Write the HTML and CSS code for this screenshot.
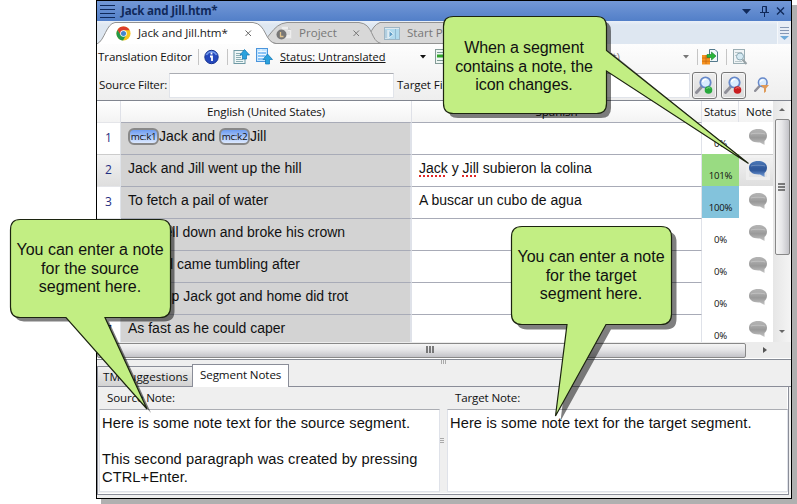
FILE: index.html
```html
<!DOCTYPE html>
<html lang="en">
<head>
<meta charset="utf-8">
<title>Translation Editor</title>
<link rel="stylesheet" href="styles.css">
</head>
<body>
<svg class="defs" width="0" height="0">
  <defs>
    <linearGradient id="gray" x1="0" y1="0" x2="0" y2="1"><stop offset="0" stop-color="#b4b4b4"/><stop offset=".3" stop-color="#a9a9a9"/><stop offset=".55" stop-color="#999"/><stop offset="1" stop-color="#c4c4c4"/></linearGradient>
    <linearGradient id="blue" x1="0" y1="0" x2="0" y2="1"><stop offset="0" stop-color="#4c79b8"/><stop offset=".45" stop-color="#315a9c"/><stop offset=".6" stop-color="#315a9c"/><stop offset="1" stop-color="#7ba3dc"/></linearGradient>
    <symbol id="note" viewBox="0 0 18 16"><path d="M9 0C14 0 18 2.300 18 6.500C18 9 17 11 15.500 12V16L11 13.500C4 14 0 11 0 6.800C0 2.300 4 0 9 0Z"/><path d="M2 5C4 4 14 4 16 5" fill="none" stroke="#fff" stroke-opacity=".25"/></symbol>
    <symbol id="lens" viewBox="0 0 18 18"><path d="M7 10.500L1.500 16.500" stroke="#8f8f98" stroke-width="3" stroke-linecap="round"/><circle cx="10.500" cy="6.500" r="5.200" fill="#d9ecff" stroke="#6688c9" stroke-width="1.800"/><path d="M7.500 6a3.500 3.500 0 0 1 4-2.600" stroke="#fff" stroke-width="1.500" fill="none"/></symbol>
  </defs>
</svg>
<div class="window">
  <header class="titlebar">
    <svg class="menu" width="15" height="15"><path d="M0 1.500H15M0 5.500H15M0 9.500H15M0 13.500H15" stroke="#10295a"/></svg>
    <span class="title">Jack and Jill.htm*</span>
    <svg class="winbtns" width="44" height="14"><path d="M0 5H9L4.500 10Z" fill="#10295a"/><path d="M20.500 2.500H24.500V8.500H20.500ZM18 8.500H27M22.500 8.500V13M24 2V8" stroke="#10295a" fill="none"/><path d="M35 3.500L42 10.500M42 3.500L35 10.500" stroke="#10295a" stroke-width="1.400"/></svg>
  </header>
  <nav class="tabs">
    <svg class="tabshapes" width="420" height="22">
      <path d="M265 22C272 20 273 4 283 .5H420V22Z" fill="#d8d8d8"/>
      <path d="M265 22C272 20 273 4 283 .5H420" fill="none" stroke="#929292"/>
      <path d="M160 21.500C173 20 174 2 190 .5H262C277 2 273 19 284 21.500Z" fill="#d8d8d8" stroke="#929292"/>
      <path d="M0 22C8 18 9 2 18 .5H156C170 2 167 20 179 22Z" fill="#fff"/>
      <path d="M0 22C8 18 9 2 18 .5H156C170 2 167 20 179 21.500H420" fill="none" stroke="#929292"/>
    </svg>
    <div class="tab t1">
      <svg width="15" height="15" viewBox="0 0 16 16"><circle cx="8" cy="8" r="7.500" fill="#f6c51d"/><path d="M1.500 4.200A7.500 7.500 0 0 1 14.600 4.500H8L5 9.500Z" fill="#dc3e2c"/><path d="M1.500 4.200A7.500 7.500 0 0 0 7.500 15.500L10.500 10L5 9.500Z" fill="#23994a"/><circle cx="8" cy="8" r="3.500" fill="#fff"/><circle cx="8" cy="8" r="2.700" fill="#4386cf"/></svg>
      <span>Jack and Jill.htm*</span>
      <svg class="x" width="7" height="7"><path d="M.5.5L6 6M6 .5L.5 6" stroke="#666"/></svg>
    </div>
    <div class="tab t2">
      <svg width="17" height="16"><path d="M5.500 1.500H12L15.500 5V13.500H5.500Z" fill="#eee" stroke="#ddd"/><path d="M12 1.500V5H15.500" fill="#ccc"/><path d="M8 5H12M10 7H14M10 9H14" stroke="#d2d2d2"/><circle cx="5.500" cy="9.500" r="5" fill="#777"/><path d="M4.500 7V11.500H7.500" stroke="#e2c48c" fill="none" stroke-width="1.300"/></svg>
      <span>Project</span>
      <svg class="x" width="7" height="7"><path d="M.5.5L6 6M6 .5L.5 6" stroke="#777"/></svg>
    </div>
    <div class="tab t3">
      <svg width="16" height="13"><rect x=".5" y=".5" width="15" height="12" fill="#b0d9ed" stroke="#9eb5c4"/><path d="M1 1.500H15" stroke="#dfe9ee"/><path d="M1 3H5V12H1Z" fill="#d5e5ee"/><path d="M2 3V11M11.500 2V12" stroke="#8fb9d2"/><path d="M5 3.500V11L9.500 7.200Z" fill="#609dc6" stroke="#e8f3f8"/></svg>
      <span>Start Page</span>
    </div>
    <div class="tabmenu"><svg width="10" height="14"><path d="M0 1.500H9M0 4.500H9M0 7.500H9" stroke="#8598b5"/><path d="M0 10H9L4.500 14Z" fill="#6faad9"/></svg></div>
  </nav>
  <div class="tools">
    <div class="toolbar">
      <span class="name">Translation Editor</span><i class="sep s1"></i>
      <svg class="info" width="16" height="16"><circle cx="7.500" cy="8" r="6.700" fill="#2548bd" stroke="#183591"/><path d="M2.500 6A5.500 5.500 0 0 1 12.500 6" stroke="#6f98eb" stroke-width="1.500" fill="none"/><path d="M6 7.500H8V12M7.500 3.500V5.500" stroke="#fff" stroke-width="1.800" fill="none"/></svg><i class="sep s2"></i>
      <svg class="up1" width="17" height="16"><rect x="1" y="1.500" width="11" height="13" fill="#eff7f7" stroke="#6e99a4"/><path d="M3 4.500H8M3 6.500H8M3 8.500H8M3 10.500H10M3 12.500H10" stroke="#8caeb4"/><path d="M11.500 .5L16.500 6H13.500V10H9.500V6H7Z" fill="#2ba2dd" stroke="#0d76b6" stroke-width=".7"/></svg>
      <svg class="up2" width="17" height="17"><rect x=".5" y=".5" width="11" height="13" fill="#c3e5ff" stroke="#4b95dc"/><path d="M2 3.500H10M2 6.500H10M2 9.500H8M5 1V12" stroke="#eef9ff"/><path d="M2 5H10M2 8H9M2 11H7" stroke="#4d9fee"/><path d="M11.500 6L16.500 11.500H13.500V16H9.500V11.500H7Z" fill="#2ba2dd" stroke="#0d76b6" stroke-width=".7"/></svg>
      <span class="status">Status: Untranslated</span>
      <svg class="arr" width="7" height="4"><path d="M0 0H6L3 3.500Z" fill="#111"/></svg>
      <svg class="sheet" width="16" height="16"><rect x=".5" y=".5" width="14" height="14" fill="#eef6f2" stroke="#849b97"/><path d="M2 3.500H10M2 11.500H10" stroke="#7d9c96"/><path d="M2 7H14" stroke="#31a32c" stroke-width="3"/></svg>
      <span class="filetype">(Default)</span>
      <svg class="arr2" width="7" height="4"><path d="M0 0H6L3 3.500Z" fill="#777"/></svg><i class="sep s3"></i>
      <svg class="imp" width="17" height="16"><path d="M7.500.5H13L15.500 3V12.500H7.500Z" fill="#f1f7fb" stroke="#53798c"/><path d="M0 6H8V15.500H0Z" fill="#f59221"/><path d="M0 9H8M0 12.200H8M4 6V15" stroke="#c96b10" stroke-width=".8"/><path d="M5 5.500H9.500V3L14 7L9.500 11V8.500H5Z" fill="#28b53a" stroke="#16802a" stroke-width=".6"/></svg><i class="sep s4"></i>
      <svg class="prev" width="15" height="16"><rect x=".5" y=".5" width="11" height="14" fill="#eff4f6" stroke="#9baeb4"/><path d="M2 3.500H9M2 12.500H9M2 6.500H4" stroke="#b9c7ca"/><circle cx="7" cy="7.500" r="3.500" fill="#d5eaf3" stroke="#8ca8b4"/><path d="M9.500 10.500L13.500 15" stroke="#98a2a6" stroke-width="2"/></svg>
    </div>
    <div class="filters">
      <span class="fl1">Source Filter:</span><input class="in1" aria-label="Source Filter"><span class="fl2">Target Filter:</span><input class="in2" aria-label="Target Filter">
      <button class="fb"><svg width="20" height="19"><use href="#lens" width="18" height="18"/><circle cx="13.500" cy="14" r="3.800" fill="#27a83c"/><path d="M11.500 12.500a3 2 0 0 1 4-.5" stroke="#84d78a" fill="none"/></svg></button><button class="fb"><svg width="20" height="19"><use href="#lens" width="18" height="18"/><circle cx="13.500" cy="14" r="3.800" fill="#c91d20"/><path d="M11.500 12.500a3 2 0 0 1 4-.5" stroke="#ee7775" fill="none"/></svg></button>
      <svg class="funnel" width="17" height="17"><use href="#lens" width="15" height="15"/><path d="M6.500 8H15L12 11.500V14.500L10 16V11.500Z" fill="#df9a58"/></svg>
    </div>
  </div>
  <main class="editor">
    <div class="sheetgrid">
      <div class="row head"><div></div><div>English (United States)</div><div>Spanish</div><div>Status</div><div>Note</div></div>
      <div class="row"><div class="num">1</div><div class="src"><b class="tag">mc:k1</b>Jack and <b class="tag">mc:k2</b>Jill</div><div class="trg"></div><div class="pct">0%</div><div class="note"><svg width="18" height="16" fill="url(#gray)"><use href="#note"/></svg></div></div>
      <div class="row on"><div class="num">2</div><div class="src">Jack and Jill went up the hill</div><div class="trg"><u>Jack</u>&nbsp;y&nbsp;<u>Jill</u>&nbsp;subieron la colina</div><div class="pct green">101%</div><div class="note"><svg width="18" height="16" fill="url(#blue)"><use href="#note"/></svg></div></div>
      <div class="row"><div class="num">3</div><div class="src">To fetch a pail of water</div><div class="trg">A buscar un cubo de agua</div><div class="pct cyan">100%</div><div class="note"><svg width="18" height="16" fill="url(#gray)"><use href="#note"/></svg></div></div>
      <div class="row"><div class="num">4</div><div class="src">Jack fell down and broke his crown</div><div class="trg"></div><div class="pct">0%</div><div class="note"><svg width="18" height="16" fill="url(#gray)"><use href="#note"/></svg></div></div>
      <div class="row"><div class="num">5</div><div class="src">And Jill came tumbling after</div><div class="trg"></div><div class="pct">0%</div><div class="note"><svg width="18" height="16" fill="url(#gray)"><use href="#note"/></svg></div></div>
      <div class="row"><div class="num">6</div><div class="src">Then up Jack got and home did trot</div><div class="trg"></div><div class="pct">0%</div><div class="note"><svg width="18" height="16" fill="url(#gray)"><use href="#note"/></svg></div></div>
      <div class="row last"><div class="num">7</div><div class="src">As fast as he could caper</div><div class="trg"></div><div class="pct">0%</div><div class="note"><svg width="18" height="16" fill="url(#gray)"><use href="#note"/></svg></div></div>
    </div>
    <div class="vscroll"><i class="au"></i><div class="vthumb"><svg width="8" height="9"><path d="M0 1H7M0 4H7M0 7H7" stroke="#555" stroke-width="1.500"/></svg></div><i class="ad"></i></div>
  </main>
  <div class="hscroll"><div class="hthumb"><svg width="9" height="8"><path d="M1 0V7M4 0V7M7 0V7" stroke="#555" stroke-width="1.500"/></svg></div><i class="ar"></i></div>
  <section class="bottom">
    <div class="split"><svg width="6" height="4"><path d="M.5 0V4M2.500 0V4M4.500 0V4" stroke="#aaa"/></svg></div>
    <div class="btabs"><div class="bt">TM Suggestions</div><div class="bt cur">Segment Notes</div><div class="rest"></div></div>
    <div class="panel">
      <div class="pane pa"><label>Source Note:</label><div class="text">Here is some note text for the source segment.<br><br>This second paragraph was created by pressing<br>CTRL+Enter.</div></div>
      <svg class="grip" width="4" height="6"><path d="M0 .5H4M0 2.500H4M0 4.500H4" stroke="#aaa"/></svg>
      <div class="pane pb"><label>Target Note:</label><div class="text">Here is some note text for the target segment.</div></div>
    </div>
  </section>
</div>
<svg class="callouts" width="797" height="504">
  <defs>
    <path id="c1" d="M453.500 16.500H596.500Q606.500 16.500 606.500 26.500V50.500L748.500 163.500L606.500 71V103.500Q606.500 113.500 596.500 113.500H453.500Q443.500 113.500 443.500 103.500V26.500Q443.500 16.500 453.500 16.500Z"/>
    <path id="c2" d="M20 219.500H160Q170.500 219.500 170.500 230V307Q170.500 317.500 160 317.500H105L147 409L66 317.500H20Q10.500 317.500 10.500 307V230Q10.500 219.500 20 219.500Z"/>
    <path id="c3" d="M522 226.500H661Q671.500 226.500 671.500 237V314Q671.500 324.500 661 324.500H606L555.500 416L567 324.500H522Q511.500 324.500 511.500 314V237Q511.500 226.500 522 226.500Z"/>
    <path id="c1s" d="M453.500 16.500H596.500Q606.500 16.500 606.500 26.500V48L744 159L606.500 69V103.500Q606.500 113.500 596.500 113.500H453.500Q443.500 113.500 443.500 103.500V26.500Q443.500 16.500 453.500 16.500Z"/>
  </defs>
  <g fill="#000" fill-opacity=".5"><use href="#c1s" x="4.500" y="4.500"/><use href="#c2" x="4" y="4"/><use href="#c3" x="5" y="5"/></g>
  <g fill="#c2ee83" stroke="#1c2410" stroke-width="1.200"><use href="#c1"/><use href="#c2"/><use href="#c3"/></g>
</svg>
<div class="say say1">When a segment<br>contains a note, the<br>icon changes.</div>
<div class="say say2">You can enter a note<br>for the source<br>segment here.</div>
<div class="say say3">You can enter a note<br>for the target<br>segment here.</div>
</body>
</html>
```
FILE: styles.css
```css
* { box-sizing: border-box; }
body { margin: 0; width: 797px; height: 504px; overflow: hidden; position: relative; background: #fff; font: 11.6px/16px "Open Sans", "Noto Sans", sans-serif; color: #111; }
svg { display: block; flex: none; }
.defs { position: absolute; }
.window { width: 696px; height: 499px; margin-left: 96px; border: 1px solid #000; background: #efefef; box-shadow: 5px 5px 0 #b0b0b0; display: flex; flex-direction: column; }
.titlebar { height: 20px; flex: none; display: flex; align-items: center; background: linear-gradient(#7398d7, #527fc8); padding: 0 5px 0 3px; }
.title { margin-left: 6px; font-weight: 700; font-size: 11.6px; letter-spacing: -.2px; color: #10295a; white-space: nowrap; }
.winbtns { margin-left: auto; }
.tabs { height: 23px; flex: none; display: flex; position: relative; background: linear-gradient(#eaf0f8 0, #dee7f1 4px); padding-top: 1px; }
.tabshapes { position: absolute; left: 0; top: 1px; }
.tab { position: relative; display: flex; align-items: center; height: 22px; color: #777; white-space: nowrap; }
.tab .x { margin-left: auto; }
.t1 { margin-left: 19px; width: 136px; color: #1b1b1b; }
.t1 span { margin-left: 7px; letter-spacing: -.08px; }
.t2 { margin-left: 24px; width: 84px; }
.t2 span { margin-left: 6px; }
.t3 { margin-left: 24px; width: 90px; }
.t3 span { margin-left: 7px; }
.tabmenu { margin-left: auto; width: 14px; padding: 4px 2px; border-left: 1px solid #f5f8fb; background: #e7edf5; }
.tools { height: 57px; flex: none; background: linear-gradient(#fdfdfd, #eee); border-bottom: 1px solid #81858f; }
.toolbar { height: 27px; display: flex; align-items: center; white-space: nowrap; padding-bottom: 2px; }
.toolbar > * { flex: none; }
.name { width: 101px; padding-left: 1px; letter-spacing: -.12px; }
.sep { width: 1px; height: 16px; background: #c5c5c5; }
.info { margin-left: 5px; width: 16px; }
.s2 { margin-left: 7px; }
.up1 { margin-left: 5px; }
.up2 { margin-left: 6px; }
.status { margin-left: 7px; width: 140px; text-decoration: underline; font-size: 11px; letter-spacing: .04px; }
.sheet { margin-left: 8px; }
.filetype { width: 169px; text-align: right; color: #888; }
.arr2 { margin-left: 63px; }
.s3 { margin-left: 7px; }
.imp { margin-left: 4px; }
.s4 { margin-left: 7px; }
.prev { margin-left: 6px; }
.filters { height: 30px; display: flex; align-items: center; white-space: nowrap; padding-bottom: 1px; }
.fl1 { width: 72px; padding-left: 2px; letter-spacing: -.17px; flex: none; padding-bottom: 2px; }
.in1, .in2 { height: 25px; border: 1px solid #e1e4ea; border-top-color: #abadb3; background: #fff; padding: 0; flex: none; }
.in1 { width: 225px; }
.fl2 { width: 75px; padding-left: 3px; flex: none; letter-spacing: -.1px; padding-bottom: 2px; }
.in2 { width: 221px; }
.fb { width: 25px; height: 27px; margin-left: 2px; padding: 3px 2px; border: 1px solid #777; border-radius: 3px; background: linear-gradient(#eee, #dadada); box-shadow: inset 0 0 0 1px #f7f7f7; flex: none; }
.fb + .fb { margin-left: 4px; }
.funnel { margin-left: 8px; }
.editor { height: 241px; flex: none; display: flex; }
.sheetgrid { width: 676px; flex: none; background: #fff; }
.row { display: grid; grid-template-columns: 24px 291px 290px 37px 34px; height: 32px; }
.row > div { border-top: 1px solid #a8abb7; white-space: nowrap; }
.head { height: 21px; text-align: center; line-height: 21px; background: linear-gradient(#fff, #f3f3f3); }
.row.head > div { border-top: 0; border-right: 1px solid #dfe1e8; letter-spacing: -.1px; }
.head > :nth-child(4) { font-size: 11.3px; }
.row.head > :nth-child(5) { border-right: 0; padding-left: 6px; }
.row .num { border-top-color: #e4e5e9; border-right: 1px solid #dfe3e9; text-align: center; font-size: 12px; line-height: 30px; color: #1f2e81; }
.src, .trg { font: 14px/26px "Liberation Sans", sans-serif; padding-left: 7px; }
.src { background: #d3d3d3; border-right: 2px solid #dfe2e9; }
.trg { border-right: 1px solid #dfe2e9; }
.src { display: flex; align-items: center; height: 32px; padding-bottom: 5px; white-space: pre !important; }
.trg u { text-decoration: underline dotted #e12626 1.500px; text-underline-offset: 2px; }
.tag { display: inline-block; width: 31px; height: 17px; border: 2px solid #888; border-radius: 6px; background: linear-gradient(#6d9cf0, #dce9ff); font: 9.8px/14px "Open Sans", sans-serif; text-align: center; letter-spacing: -.3px; }
.row .pct { border-top-color: transparent; font-size: 9.6px; letter-spacing: -.2px; text-align: center; padding-top: 13px; }
.green { background: #99db82; }
.cyan { background: #83c3dc; }
.row .pct.green, .row .pct.cyan { border: 0; padding-top: 14px; }
.row .note { border-top-color: transparent; padding: 6px 0 0 10px; }
.on .num, .row.on .note { background: linear-gradient(#f3f3f3, #dedede); border-top-color: #ccc; }
.on .note svg { outline: 3px solid #eee; }
.last { height: 28px; overflow: hidden; }
.vscroll { flex: 1; background: linear-gradient(90deg, #e6e6e6, #f4f4f4); display: flex; flex-direction: column; align-items: center; }
.au { width: 0; border: 3px solid transparent; border-bottom-color: #666; border-top: 0; margin-top: 7px; }
.vthumb { width: 15px; height: 136px; margin-top: 8px; border: 1px solid #888; border-radius: 2px; background: linear-gradient(90deg, #f5f5f5, #e7e7e9 45%, #c3c3c8); display: flex; align-items: center; justify-content: center; }
.ad { width: 0; border: 3px solid transparent; border-top-color: #666; border-bottom: 0; margin-top: 75px; }
.hscroll { height: 16px; flex: none; background: #ececec; display: flex; align-items: center; }
.hthumb { width: 649px; height: 15px; border: 1px solid #888; border-radius: 2px; background: linear-gradient(#f5f5f5, #e5e5e7 45%, #c3c3c8); display: flex; align-items: center; padding-left: 328px; }
.ar { width: 0; border: 3px solid transparent; border-left: 4px solid #555; border-right: 0; margin-left: 17px; }
.bottom { flex: 1; display: flex; flex-direction: column; border-top: 1px solid #fff; }
.split { height: 5px; border-top: 1px solid #858a94; padding-left: 344px; }
.btabs { display: flex; align-items: flex-end; height: 23px; }
.bt { height: 21px; width: 95px; border: 1px solid #8a8d98; border-right: 0; background: linear-gradient(#f1f1f1, #d2d2d2); line-height: 20px; padding-left: 5px; white-space: nowrap; letter-spacing: .04px; }
.cur { width: 97px; height: 23px; border: 1px solid #8a8d98; border-bottom: 0; background: #fff; padding-left: 7px; letter-spacing: -.1px; }
.rest { flex: 1; height: 1px; background: #8a8d98; }
.panel { height: 108px; margin-right: 2px; border: 1px solid #8a8d98; border-top: 0; display: flex; align-items: center; box-shadow: inset -1px -1px #fff; }
.pane { height: 107px; display: flex; flex-direction: column; }
.pa { width: 342px; padding-left: 1px; }
.pb { width: 341px; margin-left: 3px; }
.pane label { height: 22px; line-height: 22px; padding-left: 8px; letter-spacing: -.15px; }
.text { height: 83px; background: #fff; border: 1px solid #dfe2e9; border-top-color: #abadb3; font: 14.67px/18px "Liberation Sans", sans-serif; letter-spacing: .075px; padding: 4px 2px; white-space: nowrap; }
.callouts { position: absolute; left: 0; top: 0; }
.say { position: absolute; width: 160px; text-align: center; font: 16px/18.500px "Liberation Sans", sans-serif; white-space: nowrap; color: #111; }
.say1 { left: 444px; top: 39px; letter-spacing: -.1px; }
.say2 { left: 10px; top: 241px; }
.say3 { left: 511px; top: 248px; }
```
